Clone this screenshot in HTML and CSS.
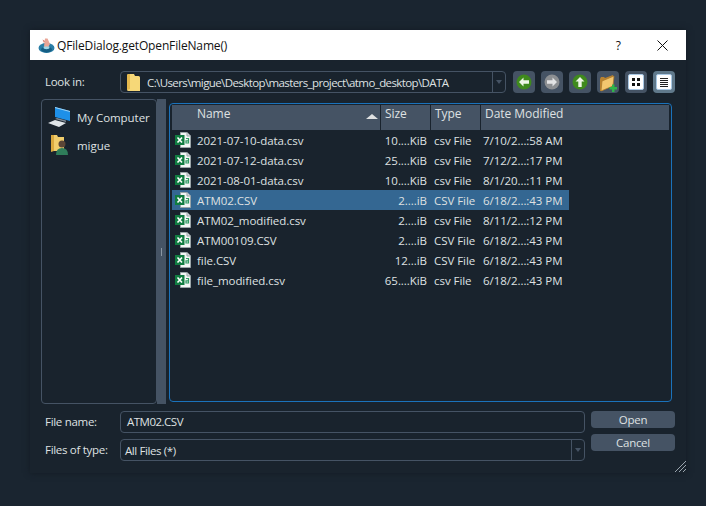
FILE: index.html
```html
<!DOCTYPE html>
<html lang="en">
<head>
	<meta charset="utf-8" />
	<title>QFileDialog.getOpenFileName()</title>
	<link rel="stylesheet" href="styles.css">
</head>
<body>
	<svg class="defs" width="0" height="0">
		<symbol id="xls" viewBox="0 0 16 16">
			<path d="M5.500 .5h6.500l3.500 3.500v11.500H5.500z" fill="#f2f5f5" stroke="#9aa5a8"/>
			<path d="M12 .5V4h3.500" fill="#d5dcde" stroke="#9aa5a8"/>
			<path d="M11 6.500h2.500V11H11V8.800h2.500" fill="none" stroke="#2f9a63" stroke-width="1.200"/>
			<rect x="0" y="3" width="9.500" height="10" fill="#107c41"/>
			<path d="M2.500 5.500l4.500 5M7 5.500l-4.500 5" stroke="#fff" stroke-width="1.600"/>
		</symbol>
	</svg>

	<div class="dialog">
		<div class="titlebar">
			<svg class="app-icon" width="17" height="17" viewBox="0 0 17 17">
				<ellipse cx="8.500" cy="11" rx="8" ry="5" fill="#2a7ea6"/>
				<ellipse cx="8.500" cy="12.500" rx="5.500" ry="3" fill="#155e84"/>
				<ellipse cx="8.500" cy="10.500" rx="3" ry="1.700" fill="#9fd6e6"/>
				<path d="M6 9.500L7 1.500h2.500L12 7l-1.500 2.500z" fill="#e9a596"/>
				<path d="M7 4l-2.500-1.500L6 6z" fill="#d47c6c"/>
			</svg>
			<span class="title">QFileDialog.getOpenFileName()</span>
			<span class="help">?</span>
			<svg class="close" width="11" height="11" viewBox="0 0 11 11">
				<path d="M.5.5l10 10M10.500.5l-10 10" stroke="#111" fill="none"/>
			</svg>
		</div>

		<div class="content">
			<div class="lookin">
				<label class="lbl">Look in:</label>
				<div class="combo path">
					<svg class="folder" width="13" height="17" viewBox="0 0 13 17">
						<path d="M0 1.500Q0 0 1.500 0H7l1 2h3.500Q13 2 13 3.500V17H1.500Q0 17 0 15.500z" fill="#f6d878"/>
						<path d="M0 1.500Q0 0 1.500 0H3V15L0 16z" fill="#e5b94e"/>
					</svg>
					<span class="path-text tight">C:\Users\migue\Desktop\masters_project\atmo_desktop\DATA</span>
					<span class="arrow"></span>
				</div>
				<div class="tools">
					<button class="tool">
						<svg width="16" height="16" viewBox="0 0 16 16"><circle cx="8" cy="8" r="7.500" fill="#3f8a1d"/><path d="M3 8l4.500-4.500V6.300H13v3.400H7.500v2.800z" fill="#eef6e6"/></svg>
					</button>
					<button class="tool">
						<svg width="16" height="16" viewBox="0 0 16 16"><circle cx="8" cy="8" r="7.500" fill="#8c8f92"/><path d="M13 8L8.500 3.500V6.300H3v3.400h5.500v2.800z" fill="#e3e4e5"/></svg>
					</button>
					<button class="tool">
						<svg width="16" height="16" viewBox="0 0 16 16"><circle cx="8" cy="8" r="7.500" fill="#3f8a1d"/><path d="M8 3l4.500 4.500H9.700V13H6.300V7.500H3.500z" fill="#eef6e6"/></svg>
					</button>
					<button class="tool">
						<svg width="18" height="19" viewBox="0 0 18 19"><path d="M1 6l1-2h3l1 1 8-3v10L3 18H1z" fill="#b9822f"/><path d="M3 8l12-5-1 10L2 18z" fill="#f2c66f" stroke="#a87628" stroke-width=".7"/><path d="M10.500 14H13v-2.500h2.500V14H18v2.500h-2.500V19H13v-2.500h-2.500z" fill="#2fb44a"/></svg>
					</button>
					<button class="tool">
						<svg width="16" height="16" viewBox="0 0 16 16"><rect x=".5" y=".5" width="15" height="15" rx="1.500" fill="#fff" stroke="#a9c8e4"/><path d="M4 4h3v3H4zM9 4h3v3H9zM4 9h3v3H4zM9 9h3v3H9z" fill="#111"/></svg>
					</button>
					<button class="tool on">
						<svg width="16" height="16" viewBox="0 0 16 16"><rect x=".5" y=".5" width="15" height="15" rx="1.500" fill="#fff" stroke="#a9c8e4"/><path d="M4 4.500h8M4 6.500h8M4 8.500h8M4 10.500h8M4 12.500h8" stroke="#222"/></svg>
					</button>
				</div>
			</div>

			<div class="middle">
				<div class="sidebar">
					<div class="place">
						<svg width="24" height="22" viewBox="0 0 24 22">
							<path d="M8 1l15 4v10L8 11z" fill="#1e90e8"/>
							<path d="M8 1l15 4v1L8 2z" fill="#9fd4f5"/>
							<path d="M10 12l9 2.500v1.500L8 13z" fill="#7d8a96"/>
							<path d="M1 17l7-3 11 3-7 4z" fill="#dfe4e8"/>
						</svg>
						<span>My Computer</span>
					</div>
					<div class="place">
						<svg width="24" height="22" viewBox="0 0 24 22">
							<path d="M4 1h6l1 2h6v14H4z" fill="#f0cd6c"/>
							<path d="M4 1h3v16l-3 1z" fill="#d9a93f"/>
							<circle cx="15" cy="10" r="3.500" fill="#5b4636"/>
							<path d="M9 21q0-7 6-7t6 7z" fill="#2f7d5a"/>
						</svg>
						<span>migue</span>
					</div>
				</div>
				<div class="splitter"><i></i></div>
				<div class="files">
					<div class="row head">
						<div class="cell name">Name<span class="sort"></span></div>
						<div class="cell size">Size</div>
						<div class="cell type">Type</div>
						<div class="cell date">Date Modified</div>
					</div>
					<div class="row"><svg class="xls"><use href="#xls"/></svg><div class="cell name">2021-07-10-data.csv</div><div class="cell size">10....KiB</div><div class="cell type">csv File</div><div class="cell date">7/10/2...:58 AM</div></div>
					<div class="row"><svg class="xls"><use href="#xls"/></svg><div class="cell name">2021-07-12-data.csv</div><div class="cell size">25....KiB</div><div class="cell type">csv File</div><div class="cell date">7/12/2...:17 PM</div></div>
					<div class="row"><svg class="xls"><use href="#xls"/></svg><div class="cell name">2021-08-01-data.csv</div><div class="cell size">10....KiB</div><div class="cell type">csv File</div><div class="cell date">8/1/20...:11 PM</div></div>
					<div class="row sel"><svg class="xls"><use href="#xls"/></svg><div class="cell name">ATM02.CSV</div><div class="cell size">2....iB</div><div class="cell type">CSV File</div><div class="cell date">6/18/2...:43 PM</div></div>
					<div class="row"><svg class="xls"><use href="#xls"/></svg><div class="cell name">ATM02_modified.csv</div><div class="cell size">2....iB</div><div class="cell type">csv File</div><div class="cell date">8/11/2...:12 PM</div></div>
					<div class="row"><svg class="xls"><use href="#xls"/></svg><div class="cell name">ATM00109.CSV</div><div class="cell size">2....iB</div><div class="cell type">CSV File</div><div class="cell date">6/18/2...:43 PM</div></div>
					<div class="row"><svg class="xls"><use href="#xls"/></svg><div class="cell name">file.CSV</div><div class="cell size">12...iB</div><div class="cell type">CSV File</div><div class="cell date">6/18/2...:43 PM</div></div>
					<div class="row"><svg class="xls"><use href="#xls"/></svg><div class="cell name">file_modified.csv</div><div class="cell size">65....KiB</div><div class="cell type">csv File</div><div class="cell date">6/18/2...:43 PM</div></div>
				</div>
			</div>

			<div class="bottom">
				<div class="fields">
					<div class="field">
						<label class="lbl">File name:</label>
						<div class="combo input">ATM02.CSV</div>
					</div>
					<div class="field">
						<label class="lbl">Files of type:</label>
						<div class="combo type-box"><span class="path-text">All Files (*)</span><span class="arrow"></span></div>
					</div>
				</div>
				<div class="buttons">
					<button class="btn">Open</button>
					<button class="btn">Cancel</button>
				</div>
			</div>
			<svg class="grip" width="11" height="11" viewBox="0 0 11 11">
				<path d="M0 11L11 0M4 11L11 4M8 11l3-3" stroke="#9aa5ae" fill="none"/>
			</svg>
		</div>
	</div>
</body>
</html>
```

FILE: styles.css
```css
* {
	box-sizing: border-box;
}
html, body {
	height: 100%;
}
body {
	margin: 0;
	padding: 30px;
	overflow: hidden;
	background: #1a2530;
	color: #dfe1e2;
	font-family: "Open Sans", sans-serif;
	font-size: 11.5px;
}
.defs {
	position: absolute;
}

.dialog {
	width: 656px;
	height: 443px;
	background: #19232d;
	box-shadow: 0 0 6px #131b23;
	display: flex;
	flex-direction: column;
}
.titlebar {
	height: 30px;
	background: #fff;
	color: #111;
	display: flex;
	align-items: center;
	padding-left: 8px;
	flex: none;
}
.app-icon {
	margin-right: 2px;
}
.title {
	font-size: 12px;
	letter-spacing: -0.15px;
	flex: 1;
}
.help {
	font-size: 12px;
	margin-right: 36px;
}
.close {
	margin-right: 18px;
}

.content {
	position: relative;
	flex: 1;
	padding: 11px 11px 0;
}
.lbl {
	width: 79px;
	padding: 0 0 2px 4px;
	letter-spacing: -0.3px;
	flex: none;
}
.lookin {
	display: flex;
	align-items: center;
	height: 22px;
}
.combo {
	height: 22px;
	border: 1px solid #455364;
	border-radius: 4px;
	display: flex;
	align-items: center;
}
.path {
	width: 387px;
	padding-left: 6px;
}
.folder {
	margin-right: 7px;
	flex: none;
}
.path-text {
	flex: 1;
	white-space: nowrap;
	letter-spacing: -0.4px;
}
.path-text.tight {
	letter-spacing: -0.6px;
}
.arrow {
	width: 13px;
	height: 100%;
	border-left: 1px solid #455364;
	flex: none;
	position: relative;
}
.arrow::after {
	content: "";
	position: absolute;
	left: 3px;
	top: 8px;
	border: 3.500px solid transparent;
	border-top: 4px solid #455364;
}
.tools {
	display: flex;
	gap: 6px;
	margin-left: 7px;
}
.tool {
	width: 22px;
	height: 22px;
	padding: 0;
	border: 0;
	border-radius: 4px;
	background: #455364;
	display: flex;
	align-items: center;
	justify-content: center;
}
.tool.on {
	background: #60798b;
}

.middle {
	display: flex;
	height: 305px;
	margin-top: 6px;
}
.sidebar {
	width: 116px;
	border: 1px solid #455364;
	border-radius: 4px;
	padding: 3px 0 0 5px;
}
.place {
	display: flex;
	align-items: center;
	gap: 6px;
	height: 28px;
	letter-spacing: -0.05px;
}
.place svg {
	flex: none;
}
.splitter {
	width: 9px;
	background: #455364;
	display: flex;
	align-items: center;
	justify-content: center;
}
.splitter i {
	width: 1px;
	height: 8px;
	background: #8a96a3;
}
.files {
	width: 503px;
	height: 299px;
	margin: 4px 0 0 3px;
	border: 1px solid #1a72bb;
	border-radius: 4px;
	padding: 1px 2px 0 2px;
}
.row {
	position: relative;
	display: flex;
	width: 397px;
	height: 20px;
	align-items: center;
	white-space: nowrap;
	letter-spacing: -0.05px;
}
.row.head {
	width: 497px;
	height: 25px;
	background: #455364;
	font-size: 12px;
	align-items: stretch;
}
.head .cell {
	padding: 0 0 0 4px;
	border-right: 1px solid #19232d;
	line-height: 17px;
	text-align: left;
}
.row.sel {
	background: #346792;
}
.xls {
	position: absolute;
	left: 3px;
	top: 2px;
	width: 16px;
	height: 16px;
}
.cell {
	flex: none;
}
.name {
	width: 209px;
	padding-left: 25px;
}
.head .name {
	padding-left: 25px;
	position: relative;
}
.size {
	width: 50px;
	text-align: right;
	padding-right: 4px;
}
.type {
	width: 50px;
	padding-left: 3px;
}
.date {
	width: 88px;
	padding-left: 2px;
}
.head .date {
	width: 188px;
	border-right: 0;
}
.sort {
	position: absolute;
	right: 2px;
	top: 9px;
	border: 6px solid transparent;
	border-top: 0;
	border-bottom: 5px solid #dfe1e2;
}

.bottom {
	display: flex;
	margin-top: 7px;
}
.fields {
	width: 544px;
	display: flex;
	flex-direction: column;
	gap: 6px;
}
.field {
	display: flex;
	align-items: center;
}
.field .combo {
	flex: 1;
}
.input {
	padding: 0 0 1px 6px;
	letter-spacing: -0.5px;
}
.type-box {
	padding-left: 4px;
}
.buttons {
	display: flex;
	flex-direction: column;
	gap: 6px;
	margin-left: 6px;
}
.btn {
	width: 84px;
	height: 17px;
	padding: 0;
	border: 0;
	border-radius: 4px;
	background: #455364;
	color: #dfe1e2;
	font: inherit;
	letter-spacing: -0.3px;
	line-height: 15px;
}
.grip {
	position: absolute;
	right: 0;
	bottom: 1px;
}
```
